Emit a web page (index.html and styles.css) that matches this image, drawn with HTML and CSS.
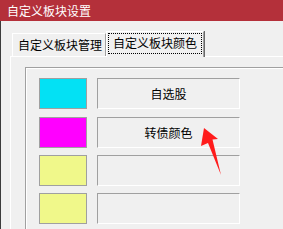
FILE: index.html
```html
<!DOCTYPE html>
<html>
<head>
<meta charset="utf-8">
<link rel="stylesheet" href="styles.css">
</head>
<body>
<div class="window">
  <div class="titlebar">自定义板块设置</div>
  <div class="client">
    <div class="tabs">
      <div class="tab">自定义板块管理</div>
      <div class="tab active"><span class="focus">自定义板块颜色</span></div>
    </div>
    <div class="page">
      <div class="group">
        <div class="row">
          <div class="swatch cyan"></div>
          <div class="field">自选股</div>
        </div>
        <div class="row">
          <div class="swatch magenta"></div>
          <div class="field">转债颜色</div>
        </div>
        <div class="row">
          <div class="swatch yellow"></div>
          <div class="field"></div>
        </div>
        <div class="row">
          <div class="swatch yellow"></div>
          <div class="field"></div>
        </div>
      </div>
    </div>
  </div>
  <svg class="arrow" width="283" height="229" viewBox="0 0 283 229">
    <polygon points="204,128 218,139 212.5,139.5 221,175 208,143 201,146" fill="#ff1c1c"/>
  </svg>
</div>
</body>
</html>
```
FILE: styles.css
```css
html, body {
  margin: 0;
  padding: 0;
}
body {
  width: 283px;
  height: 229px;
  overflow: hidden;
  background: #f0f0f0;
  font-family: "Noto Sans CJK SC", "Noto Sans", sans-serif;
  font-size: 12px;
  color: #000;
}
.window {
  position: relative;
  width: 283px;
  height: 229px;
  overflow: hidden;
}
.titlebar {
  height: 21px;
  line-height: 21px;
  background: #b4303a;
  color: #fff;
  padding-left: 7px;
  font-size: 12px;
}
.client {
  border-left: 1px solid #3c3c3c;
  height: 208px;
  display: flex;
  flex-direction: column;
}
.tabs {
  display: flex;
  align-items: flex-end;
  height: 25px;
  margin-top: 10px;
  padding-left: 11px;
}
.tab {
  box-sizing: border-box;
  width: 94px;
  height: 23px;
  padding-left: 5px;
  line-height: 22px;
  border-top: 1px solid #fff;
  border-left: 1px solid #fff;
  border-right: 1px solid #a0a0a0;
  white-space: nowrap;
  overflow: hidden;
}
.tab.active {
  position: relative;
  z-index: 1;
  width: 98px;
  height: 26px;
  margin-bottom: -1px;
  padding: 1px 1px 0 1px;
  background: #f0f0f0;
  line-height: 20px;
  box-shadow: 1px 0 0 #696969;
}
.focus {
  display: block;
  padding-left: 5px;
  height: 21px;
  outline: 1px dotted #000;
  outline-offset: -1px;
}
.page {
  flex: 1;
  margin-left: 9px;
  border-top: 1px solid #fff;
  border-left: 1px solid #fff;
  padding: 10px 0 0 14px;
}
.group {
  border-top: 1px solid #a0a0a0;
  border-left: 1px solid #a0a0a0;
  box-shadow: inset 1px 1px 0 #fff;
  height: 200px;
  padding: 10px 0 0 13px;
  display: flex;
  flex-direction: column;
  gap: 7px;
}
.row {
  display: flex;
  gap: 10px;
  height: 31px;
}
.row:first-child {
  margin-bottom: 1px;
}
.swatch {
  box-sizing: border-box;
  width: 48px;
  height: 31px;
  border: 1px solid #a0a0a0;
}
.cyan { background: #03e1f4; }
.magenta { background: #ff00ff; }
.yellow { background: #f0f88a; }
.field {
  box-sizing: border-box;
  width: 143px;
  height: 31px;
  border-top: 1px solid #a0a0a0;
  border-left: 1px solid #a0a0a0;
  border-right: 1px solid #fff;
  border-bottom: 1px solid #fff;
  display: flex;
  align-items: center;
  justify-content: center;
}
.arrow {
  position: absolute;
  left: 0;
  top: 0;
}
```
